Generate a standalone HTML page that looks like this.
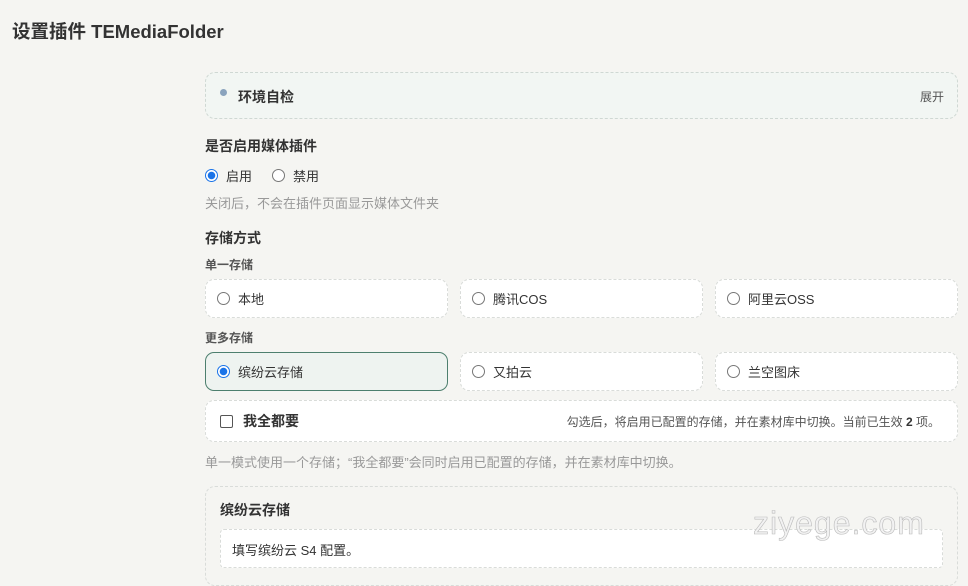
<!DOCTYPE html><html><head><meta charset="utf-8"><style>
*{box-sizing:border-box;margin:0;padding:0}
body{width:968px;height:573px;overflow:hidden;background:#f5f5f2;font-family:"Liberation Sans","Noto Sans CJK SC",sans-serif;color:#333;font-size:13px;position:relative}
.a{position:absolute}
.card{position:absolute;background:#fff;border:1px dashed #d9dcd9;border-radius:9px;display:flex;align-items:center;padding-left:11px;font-size:13px;color:#333}
.r{width:13px;height:13px;border:1px solid #777;border-radius:50%;display:inline-block;margin-right:8px;background:#fff}
.r.on{border:1px solid #1a73e8;background:radial-gradient(circle,#1a73e8 3.5px,#fff 4px)}
.lbl{font-weight:bold;font-size:14px;color:#333}
.hint{color:#999;font-size:13px}
</style></head><body>
<div class="a" style="left:12px;top:18px;font-size:18.5px;font-weight:bold;color:#333">设置插件 TEMediaFolder</div>
<div class="a" style="left:205px;top:72px;width:753px;height:47px;background:#f2f6f3;border:1px dashed #cfd8d3;border-radius:10px"></div>
<div class="a" style="left:220px;top:89px;width:7px;height:7px;border-radius:50%;background:#8aa3bd"></div>
<div class="a lbl" style="left:238px;top:87px">环境自检</div>
<div class="a" style="left:920px;top:88px;font-size:12px;color:#555">展开</div>
<div class="a lbl" style="left:205px;top:136px">是否启用媒体插件</div>
<div class="a" style="left:205px;top:166px;display:flex;align-items:center"><span class="r on"></span>启用<span class="r" style="margin-left:20px"></span>禁用</div>
<div class="a hint" style="left:205px;top:193px">关闭后，不会在插件页面显示媒体文件夹</div>
<div class="a lbl" style="left:205px;top:228px">存储方式</div>
<div class="a" style="left:205px;top:256px;font-size:12px;font-weight:bold;color:#555">单一存储</div>
<div class="card" style="left:205px;top:279px;width:243px;height:39px"><span class="r"></span>本地</div>
<div class="card" style="left:460px;top:279px;width:243px;height:39px"><span class="r"></span>腾讯COS</div>
<div class="card" style="left:715px;top:279px;width:243px;height:39px"><span class="r"></span>阿里云OSS</div>
<div class="a" style="left:205px;top:329px;font-size:12px;font-weight:bold;color:#555">更多存储</div>
<div class="card" style="left:205px;top:352px;width:243px;height:39px;background:#eef3f0;border:1px solid #4d7f6e"><span class="r on"></span>缤纷云存储</div>
<div class="card" style="left:460px;top:352px;width:243px;height:39px"><span class="r"></span>又拍云</div>
<div class="card" style="left:715px;top:352px;width:243px;height:39px"><span class="r"></span>兰空图床</div>
<div class="card" style="left:205px;top:400px;width:753px;height:42px;padding-left:14px"><span style="width:13px;height:13px;border:1px solid #555;border-radius:2px;display:inline-block;margin-right:10px"></span><b style="font-size:14px">我全都要</b><span style="margin-left:auto;margin-right:17px;font-size:12px;color:#555">勾选后，将启用已配置的存储，并在素材库中切换。当前已生效 <b style="color:#333">2</b> 项。</span></div>
<div class="a hint" style="left:205px;top:452px">单一模式使用一个存储；“我全都要”会同时启用已配置的存储，并在素材库中切换。</div>
<div class="a" style="left:205px;top:486px;width:753px;height:100px;border:1px dashed #d9dcd9;border-radius:10px;background:#f5f5f2"></div>
<div class="a lbl" style="left:220px;top:500px">缤纷云存储</div>
<div class="a" style="left:220px;top:529px;width:723px;height:39px;background:#fff;border:1px dashed #d9dcd9;border-radius:4px;padding:10px 11px;font-size:13px">填写缤纷云 S4 配置。</div>
<div class="a" style="left:753px;top:505px;font-size:32px;color:#f2f2f2;-webkit-text-stroke:0.6px #bbb;letter-spacing:1px">ziyege.com</div>
</body></html>
